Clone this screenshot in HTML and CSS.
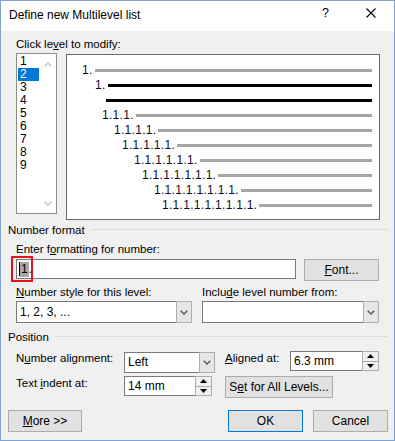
FILE: index.html
```html
<!DOCTYPE html>
<html>
<head>
<meta charset="utf-8">
<title>Define new Multilevel list</title>
<link rel="stylesheet" href="styles.css">
</head>
<body>
<div class="window">
  <div class="titlebar">
    <span class="title">Define new Multilevel list</span>
    <span class="help">?</span>
    <svg class="close" width="10" height="10" viewBox="0 0 10 10"><path d="M0.5 0.5L9.5 9.5M9.5 0.5L0.5 9.5" stroke="#000" stroke-width="1.1" fill="none"/></svg>
  </div>
  <div class="content">
    <div class="level-group">
      <div class="label lbl-click">Click le<u>v</u>el to modify:</div>
      <div class="level-row">
        <div class="listbox">
          <div class="items">
            <div class="item">1</div>
            <div class="item sel">2</div>
            <div class="item">3</div>
            <div class="item">4</div>
            <div class="item">5</div>
            <div class="item">6</div>
            <div class="item">7</div>
            <div class="item">8</div>
            <div class="item">9</div>
          </div>
          <div class="scroll">
            <svg width="8" height="5" viewBox="0 0 8 5"><polyline points="0.7,4.3 4,1 7.3,4.3" fill="none" stroke="#c4c4c4" stroke-width="1.4"/></svg>
            <svg width="8" height="5" viewBox="0 0 8 5"><polyline points="0.7,0.7 4,4 7.3,0.7" fill="none" stroke="#c4c4c4" stroke-width="1.4"/></svg>
          </div>
        </div>
        <div class="preview">
          <div class="prow i1"><span class="num">1.</span><span class="bar"></span></div>
          <div class="prow i2"><span class="num">1.</span><span class="bar black"></span></div>
          <div class="prow i3"><span class="bar black solo"></span></div>
          <div class="prow i4"><span class="num">1.1.1.</span><span class="bar"></span></div>
          <div class="prow i5"><span class="num">1.1.1.1.</span><span class="bar"></span></div>
          <div class="prow i6"><span class="num">1.1.1.1.1.</span><span class="bar"></span></div>
          <div class="prow i7"><span class="num">1.1.1.1.1.1.</span><span class="bar"></span></div>
          <div class="prow i8"><span class="num">1.1.1.1.1.1.1.</span><span class="bar"></span></div>
          <div class="prow i9"><span class="num">1.1.1.1.1.1.1.1.</span><span class="bar"></span></div>
          <div class="prow i10"><span class="num">1.1.1.1.1.1.1.1.1.</span><span class="bar"></span></div>
        </div>
      </div>
    </div>

    <div class="group-head nf-head"><span>Number format</span><span class="rule"></span></div>
    <div class="group nf">
      <div class="label lbl-enter">Enter f<u>o</u>rmatting for number:</div>
      <div class="input-row">
        <div class="text-input">
          <span class="caret"></span><span class="hl">1</span>.
          <span class="mark"></span>
        </div>
        <div class="btn btn-font"><u>F</u>ont...</div>
      </div>
      <div class="two-col">
        <div class="col col-left">
          <div class="label"><u>N</u>umber style for this level:</div>
          <div class="select">
            <div class="val">1, 2, 3, ...</div>
            <div class="arrow"><svg width="8" height="5" viewBox="0 0 8 5"><polyline points="0.7,0.7 4,4 7.3,0.7" fill="none" stroke="#5a5a5a" stroke-width="1.4"/></svg></div>
          </div>
        </div>
        <div class="col col-right">
          <div class="label">Inclu<u>d</u>e level number from:</div>
          <div class="select">
            <div class="val"></div>
            <div class="arrow"><svg width="8" height="5" viewBox="0 0 8 5"><polyline points="0.7,0.7 4,4 7.3,0.7" fill="none" stroke="#5a5a5a" stroke-width="1.4"/></svg></div>
          </div>
        </div>
      </div>
    </div>

    <div class="group-head pos-head"><span>Position</span><span class="rule"></span></div>
    <div class="group pos">
      <div class="prow-ctl row1">
        <div class="label plabel">N<u>u</u>mber alignment:</div>
        <div class="select sel-left">
          <div class="val">Left</div>
          <div class="arrow"><svg width="8" height="5" viewBox="0 0 8 5"><polyline points="0.7,0.7 4,4 7.3,0.7" fill="none" stroke="#5a5a5a" stroke-width="1.4"/></svg></div>
        </div>
        <div class="label plabel2"><u>A</u>ligned at:</div>
        <div class="spin spin-aligned">
          <div class="val">6.3 mm</div>
          <div class="btns">
            <span><svg width="7" height="4" viewBox="0 0 7 4"><polygon points="0,4 3.5,0 7,4" fill="#000"/></svg></span>
            <span class="lower"><svg width="7" height="4" viewBox="0 0 7 4"><polygon points="0,0 3.5,4 7,0" fill="#000"/></svg></span>
          </div>
        </div>
      </div>
      <div class="prow-ctl row2">
        <div class="label plabel">Text <u>i</u>ndent at:</div>
        <div class="spin spin-indent">
          <div class="val">14 mm</div>
          <div class="btns">
            <span><svg width="7" height="4" viewBox="0 0 7 4"><polygon points="0,4 3.5,0 7,4" fill="#000"/></svg></span>
            <span class="lower"><svg width="7" height="4" viewBox="0 0 7 4"><polygon points="0,0 3.5,4 7,0" fill="#000"/></svg></span>
          </div>
        </div>
        <div class="btn btn-setall">S<u>e</u>t for All Levels...</div>
      </div>
    </div>

    <div class="footer">
      <div class="btn btn-more"><u>M</u>ore &gt;&gt;</div>
      <div class="btn btn-ok default">OK</div>
      <div class="btn btn-cancel">Cancel</div>
    </div>
  </div>
</div>
</body>
</html>
```

FILE: styles.css
```css
* { box-sizing: border-box; }
html, body { margin: 0; padding: 0; }
body {
  width: 395px;
  height: 441px;
  overflow: hidden;
  background: #f0f0f0;
  font-family: "Liberation Sans", Arial, sans-serif;
  font-size: 11.5px;
  color: #000;
}
u { text-decoration: underline; text-underline-offset: 1px; }

.window {
  width: 395px;
  height: 441px;
  border: 1px solid #7ea3d5;
  background: #f0f0f0;
  display: flex;
  flex-direction: column;
}

/* title bar */
.titlebar {
  height: 30px;
  flex: none;
  background: #fff;
  display: flex;
  align-items: flex-start;
  padding: 7px 0 0 8px;
  font-size: 12px;
  line-height: 15px;
}
.title { flex: 1; }
.help { width: 7px; margin-top: -2px; margin-right: 37px; font-size: 12.5px; }
.close { margin-right: 18px; margin-top: 0; }

.content {
  flex: 1;
  padding: 0 6px 0 7px;
  display: flex;
  flex-direction: column;
}

.label { line-height: 15px; white-space: nowrap; }

/* level selection */
.level-group { padding-left: 8px; }
.lbl-click { margin-top: 6px; }
.level-row { display: flex; align-items: flex-start; margin-top: 1px; }

.listbox {
  width: 41px;
  height: 161px;
  border: 1px solid #8c8c8c;
  background: #fff;
  display: flex;
}
.items { width: 22px; padding: 1px 0 0 1px; }
.item { height: 13px; line-height: 13px; padding-left: 2px; width: 21px; font-size: 12px; }
.item.sel { background: #0078d7; color: #fff; }
.scroll {
  width: 17px;
  display: flex;
  flex-direction: column;
  justify-content: space-between;
  align-items: center;
  padding: 8px 0 7px 0;
}
.scroll svg { display: block; }

.preview {
  width: 314px;
  height: 166px;
  margin: 1px 0 0 9px;
  border: 1px solid #6a6a6a;
  background: #fff;
  padding: 8px 7px 0 0;
}
.prow { display: flex; align-items: center; height: 15px; }
.num {
  font-size: 12px;
  letter-spacing: 0.3px;
  line-height: 15px;
  color: #0c0c28;
  white-space: nowrap;
}
.bar { flex: 1; height: 3px; background: #a6a6a6; margin-left: 2px; }
.bar.black { background: #000; }
.bar.solo { margin-left: 0; }
.i1 { padding-left: 15px; }
.i2 { padding-left: 28px; }
.i3 { padding-left: 39px; }
.i4 { padding-left: 35px; }
.i5 { padding-left: 47px; }
.i6 { padding-left: 55px; }
.i7 { padding-left: 67px; }
.i8 { padding-left: 75px; }
.i9 { padding-left: 87px; }
.i10 { padding-left: 95px; }

/* group headers */
.group-head {
  display: flex;
  align-items: center;
  line-height: 15px;
}
.group-head .rule { flex: 1; height: 1px; background: #dcdcdc; margin-left: 6px; margin-top: -2px; }
.nf-head { margin-top: 3px; }
.pos-head { margin-top: 7px; }

.group { padding-left: 8px; }

/* number format */
.lbl-enter { margin-top: 4px; }
.input-row { display: flex; align-items: flex-start; margin-top: 2px; }
.text-input {
  position: relative;
  width: 280px;
  height: 20px;
  border: 1px solid #7a7a7a;
  background: #fff;
  padding: 0 0 0 2px;
  font-size: 12px;
  line-height: 18px;
  display: flex;
  align-items: center;
}
.caret { width: 1px; height: 14px; background: #000; }
.hl { background: #a8a8a8; height: 15px; line-height: 15px; padding: 0 1px; }
.mark {
  position: absolute;
  left: -6px;
  top: -4px;
  width: 22px;
  height: 26px;
  border: 2px solid #e3121c;
}

.btn {
  height: 22px;
  border: 1px solid #adadad;
  background: #e1e1e1;
  font-size: 12px;
  line-height: 20px;
  text-align: center;
  white-space: nowrap;
}
.btn.default { border-color: #0078d7; }
.btn-font { width: 75px; margin-left: 8px; }

.two-col { display: flex; margin-top: 4px; }
.col-left { width: 176px; }
.col-right { width: 177px; margin-left: 10px; }
.col .select { margin-top: 1px; }

.select { display: flex; height: 22px; }
.select .val {
  flex: 1;
  border: 1px solid #7a7a7a;
  border-right: none;
  background: #fff;
  padding-left: 3px;
  font-size: 12px;
  line-height: 20px;
}
.select .arrow {
  width: 16px;
  border: 1px solid #adadad;
  background: #e6e6e6;
  display: flex;
  align-items: center;
  justify-content: center;
}
.select .arrow svg { display: block; }

/* position */
.prow-ctl { display: flex; align-items: flex-start; height: 22px; }
.row1 { margin-top: 6px; }
.row2 { margin-top: 3px; }
.plabel { width: 108px; }
.sel-left { width: 91px; height: 21px; margin-top: 1px; }
.sel-left .val { line-height: 19px; }
.plabel2 { width: 65px; margin-left: 10px; }

.spin { display: flex; height: 20px; }
.spin .val {
  flex: 1;
  border: 1px solid #7a7a7a;
  border-right: none;
  background: #fff;
  padding-left: 3px;
  font-size: 12px;
  line-height: 18px;
}
.spin .btns {
  width: 17px;
  border: 1px solid #adadad;
  background: #f0f0f0;
  display: flex;
  flex-direction: column;
}
.spin .btns span { flex: 1; display: flex; align-items: center; justify-content: center; }
.spin .btns span.lower { border-top: 1px solid #adadad; }
.spin .btns svg { display: block; }
.spin-aligned { width: 89px; }
.spin-indent { width: 88px; }
.btn-setall { width: 108px; margin-left: 13px; }

/* footer */
.footer { display: flex; margin-top: 12px; }
.btn-more { width: 74px; }
.btn-ok { width: 75px; margin-left: auto; }
.btn-cancel { width: 75px; margin-left: 10px; }
```
